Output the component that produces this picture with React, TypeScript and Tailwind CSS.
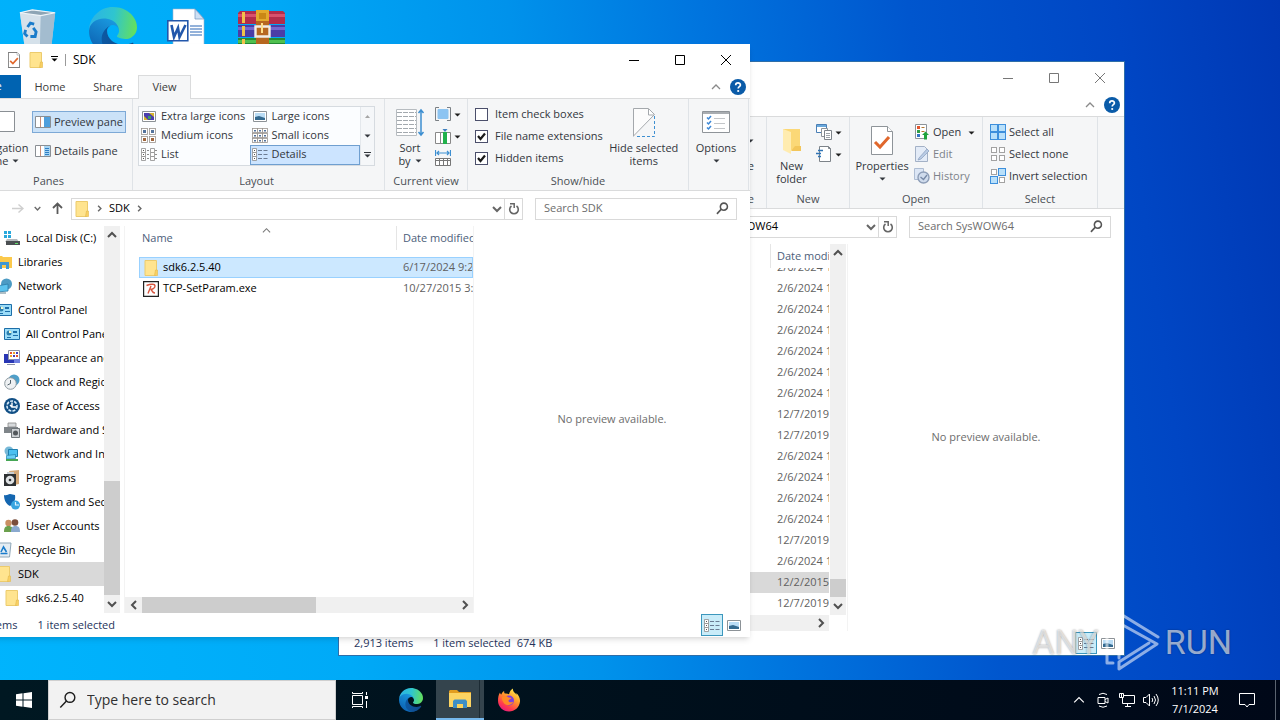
import { useId, type ReactNode } from 'react';
import clsx from 'clsx';

// ---------- small glyphs ----------

type Dir = 'up' | 'down' | 'left' | 'right';

const CHEVRONS: Record<Dir, string> = {
  up: 'M1 7l4-4 4 4',
  down: 'M1 3l4 4 4-4',
  left: 'M7 1L3 5l4 4',
  right: 'M3 1l4 4-4 4',
};

function Chevron({ dir, size = 10, width = 2 }: { dir: Dir; size?: number; width?: number }) {
  return (
    <svg viewBox="0 0 10 10" width={size} height={size} fill="none" stroke="currentColor" strokeWidth={width} className="shrink-0">
      <path d={CHEVRONS[dir]} />
    </svg>
  );
}

function Caret({ up = false, bar = false }: { up?: boolean; bar?: boolean }) {
  return (
    <svg viewBox="0 0 7 7" width="7" height="7" fill="currentColor" className="shrink-0">
      {bar && <path d="M0 0h7v1H0z" />}
      <path d={up ? 'M1 5h5L3.500 2z' : 'M.5 2.500h6l-3 3z'} />
    </svg>
  );
}

function Svg({ size = 16, h, children }: { size?: number; h?: number; children: ReactNode }) {
  return (
    <svg viewBox={`0 0 ${size} ${h ?? size}`} width={size} height={h ?? size} fill="none" className="shrink-0">
      {children}
    </svg>
  );
}

const Folder = () => (
  <Svg>
    <path d="M2 .5h11.500v13l-1 2H2z" fill="#ffe48f" stroke="#eccb6d" />
    <path d="M12.500 10h2v5.500h-3z" fill="#f9d063" stroke="#e3b84c" strokeWidth=".6" />
  </Svg>
);

const SearchGlyph = ({ size = 14 }: { size?: number }) => (
  <svg viewBox="0 0 14 14" width={size} height={size} fill="none" stroke="currentColor" strokeWidth={size > 14 ? 1.1 : 1.7} className="shrink-0">
    <circle cx="8.500" cy="5" r="3.800" />
    <path d="M5.800 7.700L1 12.800" />
  </svg>
);

const RefreshGlyph = () => (
  <Svg size={12}>
    <path d="M3.500 3A4.300 4.300 0 1 0 8.500 3" stroke="#666" strokeWidth="1.600" />
    <path d="M2 .8h4.200V5" stroke="#666" strokeWidth="1.500" />
  </Svg>
);

const HelpGlyph = () => (
  <svg viewBox="0 0 16 16" width="16" height="16">
    <circle cx="8" cy="8" r="8" fill="#0a5ba8" />
    <path d="M5.700 6.200c0-3 4.700-2.900 4.700-.2 0 1.700-2.200 1.700-2.200 3.500" fill="none" stroke="#fff" strokeWidth="1.700" />
    <circle cx="8.200" cy="12" r="1.100" fill="#fff" />
  </svg>
);

// ---------- ribbon icons ----------

const PaneIcon = ({ lines = false }: { lines?: boolean }) => (
  <Svg h={12}>
    <path d="M.5.5h15v11H.5z" fill="#fff" stroke="#8a8f94" />
    <path d="M5.500 1v10" stroke="#c98f78" />
    <path d="M9 1h6v10H9z" fill={lines ? '#a7d4f2' : '#4f9fdc'} />
    {lines && <path d="M10 3.500h4M10 5.500h4M10 7.500h4M10 9.500h4" stroke="#2f7fc4" />}
  </Svg>
);

const PictureIcon = ({ vivid = false }: { vivid?: boolean }) => (
  <Svg size={14} h={11}>
    <path d="M.5.5h13v10H.5z" fill="#fff" stroke="#8c9297" />
    <path d="M2 2h10v7H2z" fill={vivid ? '#4b3fae' : '#b9dcf5'} />
    <path d={vivid ? 'M2 5l4 4H2zM7 2h5v4z' : 'M2 6l4-1 6 2v2H2z'} fill={vivid ? '#d8b52b' : '#33698f'} />
    {vivid && <path d="M6 5h3v3H6z" fill="#3f9f5e" />}
  </Svg>
);

const GridIcon = ({ n }: { n: 2 | 3 }) => {
  const step = n === 2 ? 8 : 5;
  const cells = Array.from({ length: n * n }, (_, i) => [Math.floor(i / n) * step, (i % n) * step]);
  return (
    <Svg h={15}>
      {cells.map(([y, x]) => (
        <g key={`${x}-${y}`}>
          <rect x={x + 0.5} y={y + 0.5} width={step - (n === 2 ? 2 : 0)} height={step - (n === 2 ? 2 : 1)} fill="#fff" stroke="#9a9490" strokeWidth=".8" />
          <rect x={x + 2} y={y + 2} width={n === 2 ? 3 : 2} height={n === 2 ? 3 : 1.5} fill={y > 0 && n === 2 ? '#a0653c' : '#54739c'} />
        </g>
      ))}
    </Svg>
  );
};

const ListIcon = ({ details = false }: { details?: boolean }) => (
  <Svg h={13}>
    {[0, 4, 8].map((y) => (
      <g key={y}>
        <path d={`M.5 ${y + 0.5}h4v4h-4z`} fill="#fff" stroke="#8d8d8d" strokeWidth=".8" />
        <path d={`M2 ${y + 2}h1v1H2z`} fill="#555" />
        {details ? (
          <path d={`M6 ${y + 2.5}h4M11.500 ${y + 2.5}h4`} stroke="#6b7c93" />
        ) : (
          <>
            <path d={`M6 ${y + 2.5}h2M14 ${y + 2.5}h2`} stroke="#8d8d8d" />
            <path d={`M9.500 ${y + 0.5}h4v4h-4z`} fill="#fff" stroke="#8d8d8d" strokeWidth=".8" />
          </>
        )}
      </g>
    ))}
  </Svg>
);

const SortIcon = () => (
  <Svg size={29}>
    <path d="M.5 1.500h20v26H.5z" fill="#fff" stroke="#b7bcc0" />
    <path d="M1 4.500h19M1 8.500h19M1 12.500h19M1 16.500h19M1 20.500h19M1 24.500h19" stroke="#a3a9ae" strokeDasharray="5 1" />
    <path d="M25 2v25M22.500 5L25 2l2.500 3M22.500 24l2.500 3 2.500-3" stroke="#3d8fd1" strokeWidth="1.500" />
  </Svg>
);

const GroupByIcon = () => (
  <Svg h={14}>
    <path d="M4 .5H.5v13H4M12 .5h3.500v13H12" stroke="#7b8085" />
    <path d="M3 2.500h10v9H3z" fill="#8cc4f2" stroke="#8ec4ef" />
  </Svg>
);

const ColumnsIcon = () => (
  <Svg h={15}>
    <path d="M.5 3.500h15v11H.5zM5.500 3v11" fill="#fff" stroke="#888" />
    <path d="M8 3h4v12H8z" fill="#21b14b" />
    <path d="M7.500 0h5L10 3z" fill="#3d7fbf" />
  </Svg>
);

const SizeColumnsIcon = () => (
  <Svg h={16}>
    <path d="M.5 0v6M15.500 0v6M2 3h12M4 1L2 3l2 2M12 1l2 2-2 2" stroke="#3d8fd1" strokeWidth="1.200" />
    <path d="M.5 8.500h15v7H.5zM.5 10.500h15M4.500 8v7M8.500 8v7M12.500 8v7" fill="#fff" stroke="#777" />
  </Svg>
);

const HideIcon = () => (
  <Svg size={22} h={29}>
    <path d="M1 28V1h14l6 6z" fill="#fcfcfc" />
    <path d="M.5 28.500V.5h15l6 6L.5 28" stroke="#a4a8ac" />
    <path d="M15.500 1v6H21" fill="#fff" stroke="#a4a8ac" />
    <path d="M21.500 8v20.500H2" stroke="#3d8fd1" strokeDasharray="3 2" />
  </Svg>
);

const OptionsIcon = () => (
  <Svg size={28} h={22}>
    <path d="M.5.5h27v21H.5z" fill="#fff" stroke="#8f9499" />
    <path d="M1 1h26v2H1z" fill="#a9adb1" />
    <path d="M5 6.500l1.500 1.500L9 5M5 11.500l1.500 1.500L9 10M5 16.500l1.500 1.500L9 15" stroke="#3b87d6" strokeWidth="1.500" />
    <path d="M12 7.500h11M12 12.500h11M12 17.500h11" stroke="#c3c6c9" />
  </Svg>
);

const NavPaneIcon = () => (
  <Svg size={28} h={22}>
    <path d="M.5.5h27v20H.5z" fill="#fff" stroke="#8a8f94" />
    <path d="M1 1h8v19H1z" fill="#4f9fdc" />
  </Svg>
);

const NewFolderIcon = () => (
  <Svg size={20} h={28}>
    <path d="M1 3h17v21H1z" fill="#fbd877" />
    <path d="M1 3l8 3v22l-8-4z" fill="#ffecb0" />
    <path d="M13 20h6v5H9z" fill="#f3c65a" />
  </Svg>
);

const NewItemIcon = () => (
  <Svg>
    <path d="M.5.5h10v8H.5z" fill="#fff" stroke="#4a7fb5" />
    <path d="M1 1h9v2H1z" fill="#6aa9dc" />
    <path d="M5.500 4.500h6v8h-6z" fill="#fff" stroke="#8d9399" />
    <path d="M8.500 6.500h7v9h-7z" fill="#fff" stroke="#7d8389" />
    <path d="M10 9.500h4M10 11.500h4M10 13.500h4" stroke="#9da3a9" />
  </Svg>
);

const EasyAccessIcon = () => (
  <Svg>
    <path d="M3.500.5h9l2 2v13h-11z" fill="#fff" stroke="#7d8389" />
    <path d="M12.500.5v2h2" stroke="#7d8389" />
    <path d="M2 4.500h5M0 7.500h5M2 10.500h3" stroke="#2f73b5" strokeWidth="1.300" />
  </Svg>
);

const PropertiesIcon = ({ small = false }: { small?: boolean }) => (
  <svg viewBox="0 0 22 29" width={small ? 12 : 22} height={small ? 16 : 29} fill="none" className="shrink-0">
    <path d="M.5.500h16l5 5v23H.5z" fill="#fff" stroke={small ? '#555' : '#8e9499'} strokeWidth={small ? 1.6 : 1} />
    <path d="M16.500.5v5h5" fill="#fff" stroke="#8e9499" />
    <path d="M4 16l5 5 9-10" stroke="#e0672c" strokeWidth="3" />
  </svg>
);

const OpenIcon = () => (
  <Svg>
    <path d="M1.500.5h11v14h-11z" fill="#fff" stroke="#8d9399" />
    <path d="M3 2h3v3H3z" fill="#e2542d" />
    <path d="M3 6h3v3H3z" fill="#2f9e48" />
    <path d="M3 10h3v3H3z" fill="#3474c4" />
    <path d="M7.500 3.500h3M7.500 7.500h3" stroke="#b3762f" />
    <path d="M8 11l3.500-3.500L15 11h-2v4.500h-3V11z" fill="#1ea33b" />
  </Svg>
);

const EditIcon = () => (
  <Svg>
    <path d="M1.500.5h9l3 3v12h-12z" fill="#e3ebf7" stroke="#a3b1c6" />
    <path d="M5 12l8-9 2 2-8 8-3 1z" fill="#b9cbe4" stroke="#8fa3c2" strokeWidth=".8" />
  </Svg>
);

const HistoryIcon = () => (
  <Svg>
    <path d="M.5.5h9v11h-9z" fill="#dce6f5" stroke="#aebdd3" />
    <circle cx="9.500" cy="9.500" r="5.500" fill="#cfdbec" stroke="#8d9db7" strokeWidth="1.400" />
    <path d="M6.500 9l3 2.500L13 7" stroke="#7688a5" strokeWidth="1.300" />
  </Svg>
);

const SelectIcon = ({ on }: { on: boolean[] }) => (
  <Svg>
    {on.map((active, i) => {
      const x = (i % 2) * 8;
      const y = Math.floor(i / 2) * 8;
      return active ? (
        <rect key={i} x={x + 0.5} y={y + 0.5} width="7" height="7" fill="#b9e0fa" stroke="#3d8fdc" />
      ) : (
        <rect key={i} x={x + 1.5} y={y + 1.5} width="5" height="5" fill="#fff" stroke="#a2a2a2" />
      );
    })}
  </Svg>
);

// ---------- logos ----------

function EdgeLogo({ size }: { size: number }) {
  const id = useId();
  return (
    <svg viewBox="0 0 256 256" width={size} height={size}>
      <defs>
        <linearGradient id={`${id}a`} x1="0" y1="0" x2="1" y2="0">
          <stop offset="0" stopColor="#0c59a4" />
          <stop offset="1" stopColor="#114a8b" />
        </linearGradient>
        <linearGradient id={`${id}b`} x1=".7" y1="0" x2=".2" y2="1">
          <stop offset="0" stopColor="#1b9de2" />
          <stop offset="1" stopColor="#0b5cad" />
        </linearGradient>
        <linearGradient id={`${id}c`} x1="0" y1=".4" x2="1" y2=".5">
          <stop offset="0" stopColor="#2bb3e6" />
          <stop offset=".5" stopColor="#2fc5cf" />
          <stop offset="1" stopColor="#64e05c" />
        </linearGradient>
      </defs>
      <path fill={`url(#${id}a)`} d="M231.100 190.500c-3.400 1.800-6.900 3.400-10.500 4.700-11.500 4.300-23.700 6.500-35.900 6.500-47.300 0-88.500-32.500-88.500-74.300.1-11.400 6.400-21.900 16.400-27.300-42.800 1.800-53.800 46.400-53.800 72.500 0 73.900 68.100 81.400 82.800 81.400 7.900 0 19.800-2.300 27-4.600l1.300-.4c27.600-9.500 51-28.100 66.600-52.800 1.200-1.900.6-4.300-1.200-5.500-1.300-.8-2.900-.9-4.200-.2z" />
      <path fill={`url(#${id}b)`} d="M105.700 241.400c-8.900-5.500-16.600-12.800-22.700-21.300-26.300-36-18.400-86.500 17.600-112.800 3.800-2.700 7.700-5.200 11.900-7.200 3.100-1.500 8.400-4.100 15.500-4 10.100.1 19.600 4.900 25.700 13 4 5.400 6.300 11.900 6.400 18.700 0-.2 24.500-79.600-80-79.600-43.900 0-80 41.700-80 78.200-.2 19.300 4 38.500 12.100 56 27.600 58.800 94.800 87.600 156.400 67.100-21.100 6.600-44.100 3.700-62.900-8.100z" />
      <path fill={`url(#${id}c)`} d="M152.300 148.900c-.9 1-3.400 2.500-3.400 5.600 0 2.600 1.700 5.200 4.800 7.300 14.300 10 41.400 8.600 41.500 8.600 10.700 0 21.100-2.900 30.300-8.300 18.800-11 30.400-31.100 30.400-52.900.3-22.400-8-37.300-11.300-43.900C223.500 23.900 177.700.5 127.900.5 57.900.5.900 56.700 0 126.700c.5-36.500 36.800-66 80-66 3.500 0 23.500.3 42 10.100 16.300 8.600 24.900 18.900 30.800 29.200 6.200 10.700 7.300 24.100 7.300 29.500 0 5.300-2.700 13.300-7.800 19.400z" />
    </svg>
  );
}

const RecycleBin = ({ size = 40 }: { size?: number }) => (
  <svg viewBox="0 0 40 42" width={size} height={size} className="shrink-0">
    <path d="M1 6l13-3 24 3-4 36H6z" fill="#b5cbdc" />
    <path d="M1 6l22 3-1 33H6z" fill="#d5e1ea" />
    <path d="M23 9l15-3-4 36H22z" fill="#a3bccf" />
    <path d="M1 6l13-3 24 3-15 3z" fill="#8ea5b5" stroke="#eef4f8" strokeWidth="1.200" />
    <path d="M9 21l3-4 4 1M7 24l-1 4 3 3M12 31h5l1-5-3-4" fill="none" stroke="#1a7ccb" strokeWidth="3" />
  </svg>
);

const WordFile = () => (
  <svg viewBox="0 0 38 44" width="38" height="44" className="mr-1">
    <path d="M6 2h22l9 10v34H6z" fill="#fff" stroke="#9eb3cc" strokeWidth=".6" />
    <path d="M28 2v10h9z" fill="#cfe0f3" stroke="#6f93bd" strokeWidth=".7" />
    <path d="M23 19h12M23 22h12M23 25h12M23 28h12" stroke="#2b66b5" strokeWidth="1.200" />
    <path d="M.8 13.800h20v20H.8z" fill="#fff" stroke="#2257ab" strokeWidth="1.600" />
    <path d="M4.500 18l2.500 12 4-9 1.500 9 6-12" fill="none" stroke="#2257ab" strokeWidth="2.600" />
  </svg>
);

const WinRar = () => (
  <svg viewBox="0 0 48 44" width="48" height="44" className="mr-1">
    <path d="M1 6l2-2h43l2 2v11H1z" fill="#b32c4b" />
    <path d="M1 7h47v3H1z" fill="#d8506c" />
    <path d="M1 18h47v12H1z" fill="#4b3da6" />
    <path d="M1 20h47v3H1z" fill="#7566cf" />
    <path d="M1 31h47v13H1z" fill="#258a35" />
    <path d="M1 33h47v3H1z" fill="#4fc04e" />
    <path d="M5 5h3v11H5zM5 19h3v10H5zM5 32h3v11H5z" fill="#f1c24a" />
    <path d="M19 3h13v41H19z" fill="#b7671f" />
    <path d="M19 3h13v11H19z" fill="#e3a92c" />
    <path d="M22 6h7v6h-7z" fill="#c98716" />
    <path d="M18.500 19.500h14v10h-14z" fill="none" stroke="#f1ede6" strokeWidth="2.400" />
    <path d="M25 16v10" stroke="#ffdf8a" strokeWidth="2" />
  </svg>
);

const ExplorerLogo = () => (
  <svg viewBox="0 0 22 20" width="22" height="20">
    <path d="M0 2l1-1h7l2 2h12v4H0z" fill="#e29d1f" />
    <path d="M0 4h22v14H0z" fill="#fcd462" />
    <path d="M4 19v-7l1.500-1.500h11L18 12v7h-4v-4H8v4z" fill="#3e8fc6" />
    <path d="M8 15h6v4H8z" fill="#fbd25b" />
  </svg>
);

const FirefoxLogo = () => {
  const id = useId();
  return (
    <svg viewBox="0 0 24 24" width="24" height="24">
      <defs>
        <linearGradient id={id} x1=".8" y1="0" x2=".2" y2="1">
          <stop offset="0" stopColor="#fff14f" />
          <stop offset=".4" stopColor="#ff9a2b" />
          <stop offset=".75" stopColor="#ff3a4e" />
          <stop offset="1" stopColor="#e31587" />
        </linearGradient>
      </defs>
      <path d="M3 4.500c.2 1 .7 1.800 1.300 2C5 4.800 6 3.500 7.200 3c-.2 1 0 2 .6 2.600 1.500-.2 3 0 4.200.6C12.500 3.700 14 1.500 16 .5c-.3 2 .5 3.300 2 4.500.6.5 1 1.200 1.300 1.800.2-.6.200-1.200 0-1.800C22 7.500 23.300 10.500 23 13.500 22.500 19.300 17.800 23.500 12 23.500S1 19 1 12.800C1 9.800 1.500 6.500 3 4.500z" fill={`url(#${id})`} />
      <circle cx="12" cy="12.500" r="5" fill="#7a3fe0" />
      <path d="M5 9c2-1.500 5-1.500 6.500.5 1 .2 2.500 0 3 .5-.5 1.300-2.500 1.500-3 2.500 0 2 3 2.500 5 1-1 4-7.500 5-10 1C5.200 12.500 4.500 10.500 5 9z" fill="#ff8a25" />
    </svg>
  );
};

// ---------- navigation tree ----------

type TreeKind = 'disk' | 'libraries' | 'network' | 'panel' | 'appearance' | 'clock' | 'ease' | 'hardware' | 'internet' | 'programs' | 'shield' | 'users' | 'bin' | 'folder';

const TREE_ICONS: Record<TreeKind, ReactNode> = {
  folder: <Folder />,
  bin: (
    <Svg>
      <path d="M1 1h14l-1.500 14h-11z" fill="#e4edf3" stroke="#8fa7b8" />
      <path d="M5 10l2.500-5 3 5M4.500 11.500h7" stroke="#1a7ccb" strokeWidth="1.600" />
    </Svg>
  ),
  disk: (
    <Svg>
      <path d="M0 1h3v3H0zM4 1h3v3H4zM0 5h3v3H0zM4 5h3v3H4z" fill="#29a8dc" />
      <path d="M3 9h10l2 3H1z" fill="#b5b9bc" />
      <path d="M2 11h14v4H2z" fill="#4b4f52" />
      <path d="M11 13h3v1h-3z" fill="#61e06b" />
    </Svg>
  ),
  libraries: (
    <Svg>
      <path d="M0 2h6l1 1h9v11H0z" fill="#fbc94c" />
      <path d="M3 15V8h10v7h-3v-4H6v4z" fill="#3f97d3" />
    </Svg>
  ),
  network: (
    <Svg>
      <circle cx="10.500" cy="6" r="5.500" fill="#4c9bc4" />
      <path d="M1 8l11-2v7L1 14z" fill="#5cc3ee" stroke="#2b7ba8" strokeWidth=".8" />
      <path d="M3 15h7" stroke="#62818f" />
    </Svg>
  ),
  panel: (
    <Svg>
      <path d="M.5 2.500h15v11H.5z" fill="#9bdcf8" stroke="#1d6ea8" />
      <circle cx="5" cy="7" r="2.500" fill="#2d7fae" />
      <path d="M9 5h4v2H9zM9 9h5v1H9zM3 11h4v1H3z" fill="#1d6ea8" />
      <path d="M5 7V4.500A2.500 2.500 0 0 1 7.500 7z" fill="#f3f9d2" />
    </Svg>
  ),
  appearance: (
    <Svg>
      <path d="M0 4h13v9H0z" fill="#2836b4" />
      <path d="M4.500.5h11v9h-11z" fill="#fff" stroke="#9093a0" />
      <path d="M6 2h2v2H6zM12 5h2v2h-2z" fill="#e4502e" />
      <path d="M9 2h2v2H9zM6 5h2v2H6z" fill="#f0a02c" />
      <path d="M12 2h2v2h-2zM9 5h2v2H9z" fill="#4a3cb5" />
      <path d="M10 9h6v4h-6z" fill="#6f7fe0" />
      <path d="M3 14h8v1H3z" fill="#8a8fa8" />
    </Svg>
  ),
  clock: (
    <Svg>
      <circle cx="10" cy="6" r="5.500" fill="#4f9fc9" />
      <circle cx="6.500" cy="9.500" r="5.800" fill="#eef1f3" stroke="#8c979e" />
      <path d="M6.500 6v3.500L3.500 11" stroke="#52616b" />
    </Svg>
  ),
  ease: (
    <Svg>
      <circle cx="8" cy="8" r="8" fill="#114f85" />
      <circle cx="8" cy="8" r="5" stroke="#d8ecfb" strokeWidth="1.600" strokeDasharray="3 1.200" />
      <path d="M8 4.500V9h4M6 7l2 2" stroke="#fff" strokeWidth="1.400" />
    </Svg>
  ),
  hardware: (
    <Svg>
      <path d="M4 1h8v4H4z" fill="#d7dadc" stroke="#888" strokeWidth=".8" />
      <path d="M0 5h14v6H0z" fill="#7f8589" />
      <path d="M7.500 6.500h8v9h-8z" fill="#ccd0d3" stroke="#6f7579" />
      <circle cx="11.500" cy="11" r="2.500" fill="#53585c" />
    </Svg>
  ),
  internet: (
    <Svg>
      <circle cx="5" cy="5" r="4.500" fill="#77b9d8" />
      <path d="M4.500 3.500h9v7h-9z" fill="#4cc0f0" stroke="#1f7fae" />
      <path d="M2.500 9.500l9-1v4l-9 .5z" fill="#6ad0f5" stroke="#1f7fae" strokeWidth=".7" />
      <path d="M2 14h12" stroke="#46a655" strokeWidth="2" />
    </Svg>
  ),
  programs: (
    <Svg>
      <path d="M5 1l10-1v14l-5 1z" fill="#d4a878" />
      <path d="M3 2h7v3H3z" fill="#c9ced2" />
      <path d="M0 4h12v12H0z" fill="#2e3133" />
      <circle cx="6" cy="10" r="4.300" fill="#dfe2e4" />
      <circle cx="6" cy="10" r="1.300" fill="#2e3133" />
    </Svg>
  ),
  shield: (
    <Svg>
      <path d="M0 1c3 1 4-1 6-1s3 1 5 1c1 6-2 9-5 11C2 10 0 6 0 1z" fill="#1466b0" />
      <circle cx="11.500" cy="11" r="4.500" fill="#39a5e0" />
      <path d="M11.500 8v3H15" stroke="#e2f4ff" strokeWidth="1.200" />
    </Svg>
  ),
  users: (
    <Svg>
      <circle cx="4.500" cy="5" r="3.200" fill="#c98f63" />
      <path d="M0 14c0-4 1-6 4.500-6S9 10 9 14z" fill="#6ba04d" />
      <circle cx="11" cy="4.500" r="3.300" fill="#7a4d3b" />
      <path d="M7 14c0-4 1-6 4.500-6s4.500 2 4.500 6z" fill="#8aa9cf" />
    </Svg>
  ),
};

interface TreeItem {
  label: string;
  icon: TreeKind;
  child?: boolean;
  selected?: boolean;
}

const TREE: TreeItem[] = [
  { label: 'Local Disk (C:)', icon: 'disk', child: true },
  { label: 'Libraries', icon: 'libraries' },
  { label: 'Network', icon: 'network' },
  { label: 'Control Panel', icon: 'panel' },
  { label: 'All Control Panel Items', icon: 'panel', child: true },
  { label: 'Appearance and Personalization', icon: 'appearance', child: true },
  { label: 'Clock and Region', icon: 'clock', child: true },
  { label: 'Ease of Access', icon: 'ease', child: true },
  { label: 'Hardware and Sound', icon: 'hardware', child: true },
  { label: 'Network and Internet', icon: 'internet', child: true },
  { label: 'Programs', icon: 'programs', child: true },
  { label: 'System and Security', icon: 'shield', child: true },
  { label: 'User Accounts', icon: 'users', child: true },
  { label: 'Recycle Bin', icon: 'bin' },
  { label: 'SDK', icon: 'folder', selected: true },
  { label: 'sdk6.2.5.40', icon: 'folder', child: true },
];

// ---------- scroll bars ----------

function VScroll({ thumb, className }: { thumb: string; className?: string }) {
  return (
    <div className={clsx('flex w-4 shrink-0 flex-col items-center bg-[#f0f0f0] text-[#505050]', className)}>
      <div className="flex h-[17px] items-center"><Chevron dir="up" /></div>
      <div className="flex w-full flex-1 flex-col justify-end">
        <div className={clsx('bg-[#cdcdcd]', thumb)} />
      </div>
      <div className="flex h-[18px] items-center"><Chevron dir="down" /></div>
    </div>
  );
}

function HScroll({ thumb }: { thumb: string }) {
  return (
    <div className="flex h-4 shrink-0 items-center bg-[#f0f0f0] text-[#505050]">
      <div className="flex w-[17px] justify-center"><Chevron dir="left" /></div>
      <div className="h-full flex-1">
        <div className={clsx('h-full bg-[#cdcdcd]', thumb)} />
      </div>
      <div className="flex w-[17px] justify-center"><Chevron dir="right" /></div>
    </div>
  );
}

// ---------- ribbon pieces ----------

function Group({ label, className, children }: { label: string; className: string; children: ReactNode }) {
  return (
    <div className={clsx('flex shrink-0 flex-col border-r border-[#dfe3e7]', className)}>
      <div className="flex h-[74px] pt-1">{children}</div>
      <div className="text-center leading-4 text-[#4a4f55]">{label}</div>
    </div>
  );
}

function BigButton({ icon, lines, caret = false, className }: { icon: ReactNode; lines: string[]; caret?: boolean; className?: string }) {
  return (
    <button className={clsx('flex shrink-0 flex-col items-center leading-[13px]', className)}>
      <span className="flex h-[38px] items-center">{icon}</span>
      {lines.map((line, i) => (
        <span key={line} className="flex items-center gap-1 whitespace-nowrap">
          {line}
          {caret && lines.length > 1 && i === lines.length - 1 && <Caret />}
        </span>
      ))}
      {caret && lines.length === 1 && <span className="flex h-[13px] items-center"><Caret /></span>}
    </button>
  );
}

function SmallButton({ icon, label, caret = false, muted = false }: { icon: ReactNode; label?: string; caret?: boolean; muted?: boolean }) {
  return (
    <button aria-label={label ? undefined : 'Ribbon command'} className={clsx('flex h-[22px] items-center gap-[3px] whitespace-nowrap', muted && 'text-[#7d828a]')}>
      {icon}
      {label}
      {caret && <span className={clsx('text-[#1f1f1f]', label && 'pl-1')}><Caret /></span>}
    </button>
  );
}

function CheckOption({ label, checked = false }: { label: string; checked?: boolean }) {
  return (
    <label className="flex h-[22px] items-center gap-[7px] whitespace-nowrap">
      <span className="relative flex">
        <input type="checkbox" defaultChecked={checked} className="peer size-[13px] appearance-none border border-[#4b4f6b] bg-white" />
        <svg viewBox="0 0 13 13" width="13" height="13" className="pointer-events-none absolute inset-0 hidden peer-checked:block">
          <path d="M3 6l2.500 3L10 3.500" fill="none" stroke="#1a1a1a" strokeWidth="2.200" />
        </svg>
      </span>
      {label}
    </label>
  );
}

const LAYOUTS: { label: string; icon: ReactNode; active?: boolean }[] = [
  { label: 'Extra large icons', icon: <PictureIcon vivid /> },
  { label: 'Large icons', icon: <PictureIcon /> },
  { label: 'Medium icons', icon: <GridIcon n={2} /> },
  { label: 'Small icons', icon: <GridIcon n={3} /> },
  { label: 'List', icon: <ListIcon /> },
  { label: 'Details', icon: <ListIcon details />, active: true },
];

function ViewRibbon() {
  return (
    <>
      <Group label="Panes" className="w-[168px]">
        <BigButton icon={<NavPaneIcon />} lines={['Navigation', 'pane']} caret className="w-[64px] pl-2" />
        <div className="flex flex-col gap-[7px] pt-2 pl-[3px]">
          <button className="flex h-[22px] items-center gap-[3px] border border-[#7da9d6] bg-[#cbe2f8] px-[2px] whitespace-nowrap">
            <PaneIcon />Preview pane
          </button>
          <button className="flex h-[22px] items-center gap-[3px] border border-transparent px-[2px] whitespace-nowrap">
            <PaneIcon lines />Details pane
          </button>
        </div>
      </Group>
      <Group label="Layout" className="w-[252px] pr-[9px] pl-[5px]">
        <div className="mt-[3px] flex h-[60px] flex-1 border border-[#d6dbe0] bg-[#fbfdff]">
          <div className="grid flex-1 grid-cols-2">
            {LAYOUTS.map((l) => (
              <button
                key={l.label}
                className={clsx('-mt-px flex h-5 items-center gap-1 border px-px whitespace-nowrap', l.active ? 'border-[#6f9fd0] bg-[#cce4ff]' : 'border-transparent')}
              >
                <span className="flex w-4 justify-center">{l.icon}</span>
                {l.label}
              </button>
            ))}
          </div>
          <div className="flex w-[14px] flex-col items-center justify-around border-l border-[#e4e8ec] bg-[#f5f7f9]">
            <span className="text-[#a5a5a5]"><Caret up /></span>
            <Caret />
            <Caret bar />
          </div>
        </div>
      </Group>
      <Group label="Current view" className="w-[83px]">
        <BigButton icon={<SortIcon />} lines={['Sort', 'by']} caret className="w-[50px]" />
        <div className="flex flex-col">
          <SmallButton icon={<GroupByIcon />} caret />
          <SmallButton icon={<ColumnsIcon />} caret />
          <SmallButton icon={<SizeColumnsIcon />} />
        </div>
      </Group>
      <Group label="Show/hide" className="w-[221px]">
        <div className="flex flex-col pl-[7px]">
          <CheckOption label="Item check boxes" />
          <CheckOption label="File name extensions" checked />
          <CheckOption label="Hidden items" checked />
        </div>
        <BigButton icon={<HideIcon />} lines={['Hide selected', 'items']} className="mr-1 ml-auto w-[82px]" />
      </Group>
      <Group label="" className="w-[60px]">
        <BigButton icon={<OptionsIcon />} lines={['Options']} caret className="w-[54px]" />
      </Group>
    </>
  );
}

function HomeRibbon() {
  return (
    <>
      <div className="flex-1" />
      <Group label="Organize" className="w-[160px] items-end pr-3">
        <button className="flex flex-col items-end leading-[13px]">
          <span className="flex h-[38px] items-center"><Caret /></span>
          Rename
        </button>
      </Group>
      <Group label="New" className="w-[83px]">
        <BigButton icon={<NewFolderIcon />} lines={['New', 'folder']} className="w-[49px]" />
        <div className="flex flex-col">
          <SmallButton icon={<NewItemIcon />} caret />
          <SmallButton icon={<EasyAccessIcon />} caret />
        </div>
      </Group>
      <Group label="Open" className="w-[133px]">
        <BigButton icon={<PropertiesIcon />} lines={['Properties']} caret className="w-[64px]" />
        <div className="flex flex-col">
          <SmallButton icon={<OpenIcon />} label="Open" caret />
          <SmallButton icon={<EditIcon />} label="Edit" muted />
          <SmallButton icon={<HistoryIcon />} label="History" muted />
        </div>
      </Group>
      <Group label="Select" className="w-[115px]">
        <div className="flex flex-col pl-[7px]">
          <SmallButton icon={<SelectIcon on={[true, true, true, true]} />} label="Select all" />
          <SmallButton icon={<SelectIcon on={[false, false, false, false]} />} label="Select none" />
          <SmallButton icon={<SelectIcon on={[false, true, true, false]} />} label="Invert selection" />
        </div>
      </Group>
      <div className="w-[26px] shrink-0" />
    </>
  );
}

// ---------- explorer window ----------

interface FileRow {
  name: string;
  date: string;
  icon?: ReactNode;
  state?: 'selected' | 'inactive';
}

const SDK_FILES: FileRow[] = [
  { name: 'sdk6.2.5.40', date: '6/17/2024 9:28 AM', icon: <Folder />, state: 'selected' },
  {
    name: 'TCP-SetParam.exe',
    date: '10/27/2015 3:15 PM',
    icon: (
      <Svg>
        <path d="M.6.6h14.800v14.800H.6z" fill="#fff" stroke="#222" strokeWidth="1.200" />
        <path d="M5 12.500L8 5M3.500 4.500c4-1.500 8.500-2 8.500.5S9 8.500 7.500 8.500c2 0 1 3.500 4.500 3.500" stroke="#d8553f" strokeWidth="1.400" />
      </Svg>
    ),
  },
];

const FEB = '2/6/2024 11:40 AM';
const DEC = '12/7/2019 1:09 AM';
const SYSWOW_FILES: FileRow[] = [
  FEB, FEB, FEB, FEB, FEB, FEB, FEB, DEC, DEC, FEB, FEB, FEB, FEB, DEC, FEB, '12/2/2015 9:00 AM', DEC,
].map((date, i) => ({ name: '', date, state: i === 15 ? 'inactive' : undefined }));

interface WindowProps {
  title: string;
  tab: 'Home' | 'View';
  active?: boolean;
  className: string;
  tree: TreeItem[];
  files: FileRow[];
  scrolled?: boolean;
  status: string[];
}

const TABS = [
  { name: 'Home', width: 'w-[58px]' },
  { name: 'Share', width: 'w-[58px]' },
  { name: 'View', width: 'ml-px w-[53px]' },
];

function ViewSwitch() {
  return (
    <div className="ml-auto flex items-center gap-1 pr-[9px]">
      <button aria-label="Details view" className="flex size-[22px] items-center justify-center border border-[#3c97bd] bg-[#c9ecf9]">
        <ListIcon details />
      </button>
      <button aria-label="Large thumbnails" className="flex"><PictureIcon /></button>
    </div>
  );
}

function ExplorerWindow({ title, tab, active = false, className, tree, files, scrolled = false, status }: WindowProps) {
  return (
    <section aria-label={title} className={clsx('absolute flex h-[593px] w-[785px] flex-col bg-white', className)}>
      <header className="flex h-[31px] shrink-0 items-center pr-px pl-[14px]">
        <span className="flex w-[27px]"><Folder /></span>
        <span className="flex w-[22px] pl-[2px]"><PropertiesIcon small /></span>
        <Folder />
        <span className="px-[7px]"><Caret bar /></span>
        <span className="h-3 border-l border-[#9a9a9a]" />
        <h1 className="px-[7px] text-[12px]">{title}</h1>
        <div className={clsx('ml-auto flex', active ? 'text-black' : 'text-[#777]')}>
          {['M0 5.500h10', 'M.5.5h9v9h-9z', 'M0 0l10 10M10 0L0 10'].map((d, i) => (
            <button key={d} aria-label={['Minimize', 'Maximize', 'Close'][i]} className="flex h-[31px] w-[46px] items-center justify-center">
              <svg viewBox="0 0 10 10" width="10" height="10" fill="none" stroke="currentColor" className="overflow-visible"><path d={d} /></svg>
            </button>
          ))}
        </div>
      </header>

      <nav className="flex h-6 shrink-0 items-stretch border-b border-[#dadbdc] text-[#3b3b3b]">
        <button className="w-14 bg-[#0063b1] text-center text-white">File</button>
        {TABS.map((t) => (
          <button key={t.name} className={clsx('-mb-px', t.width, t.name === tab && 'border border-b-0 border-[#dadbdc] bg-[#f5f6f7]')}>
            {t.name}
          </button>
        ))}
        <div className="ml-auto flex items-center gap-[9px] pr-1 text-[#8a8a8a]">
          <Chevron dir="up" width={1.3} />
          <HelpGlyph />
        </div>
      </nav>

      <div className="flex h-[92px] shrink-0 overflow-hidden border-b border-[#dadbdc] bg-[#f5f6f7] text-[#33373d]">
        {tab === 'View' ? <ViewRibbon /> : <HomeRibbon />}
      </div>

      <div className="flex h-[35px] shrink-0 items-center gap-3 pr-[13px]">
        <div className="flex flex-1 items-center">
          <div className="flex w-[106px] items-center justify-end gap-[10px] pr-[7px] text-[#6a6a6a]">
            <Svg size={13}><path d="M1 6.500h11M7.500 2.500l4.500 4-4.500 4" stroke="#cfcfcf" strokeWidth="1.500" /></Svg>
            <Chevron dir="down" size={7} />
            <Svg size={13}><path d="M6.500 12V1.500M2 6l4.500-4.500L11 6" stroke="#5a5a5a" strokeWidth="1.800" /></Svg>
          </div>
          <div className="flex h-[22px] flex-1 items-center border border-[#d9d9d9] pl-[2px] text-black">
            {active ? (
              <>
                <Folder />
                <span className="px-[6px] text-[#666]"><Chevron dir="right" size={7} /></span>
                {title}
                <span className="px-[6px] text-[#666]"><Chevron dir="right" size={7} /></span>
              </>
            ) : (
              <span className="ml-auto pr-[88px] text-right">{title}</span>
            )}
            <span className={clsx('flex h-full items-center gap-[2px] text-[#666]', active && 'ml-auto')}>
              <Chevron dir="down" />
              <button aria-label="Refresh" className="flex h-full w-[18px] items-center justify-center border-l border-[#d9d9d9]"><RefreshGlyph /></button>
            </span>
          </div>
        </div>
        <label className="flex h-[22px] w-[202px] items-center border border-[#d9d9d9] pr-[7px] pl-2 text-[#555]">
          <input type="search" aria-label={`Search ${title}`} placeholder={`Search ${title}`} className="min-w-0 flex-1 bg-transparent outline-none placeholder:text-[#6d6d6d]" />
          <SearchGlyph size={13} />
        </label>
      </div>

      <div className="flex min-h-0 flex-1">
        <div className="flex w-[160px] border-r border-[#f3f3f3] pr-1">
          <ul className="min-w-0 flex-1 overflow-hidden">
            {tree.map((item) => (
              <li key={item.label} className={clsx('flex h-6 items-center gap-[6px] whitespace-nowrap', item.child ? 'pl-[39px]' : 'pl-[31px]', item.selected && 'bg-[#d9d9d9]')}>
                {TREE_ICONS[item.icon]}
                {item.label}
              </li>
            ))}
          </ul>
          <VScroll thumb="h-[114px]" />
        </div>

        <div className="flex w-[348px]">
          <div className="flex min-w-0 flex-1 flex-col">
            <div className="relative flex h-6 shrink-0 items-start text-[#4c607a]">
              <span className="h-full w-[272px] border-r border-[#e5e5e5] pl-[17px] leading-6">Name</span>
              <span className="min-w-0 flex-1 overflow-hidden pl-[6px] leading-6 whitespace-nowrap">Date modified</span>
              <span className="absolute top-0 left-[137px] text-[#777]"><Chevron dir="up" size={9} width={1.2} /></span>
            </div>
            <div className={clsx('min-h-0 flex-1 overflow-hidden', !scrolled && 'pt-[7px]')}>
              <div className={clsx('pl-[14px]', scrolled && '-mt-[11px]')}>
                <table className="w-full table-fixed border-collapse">
                  <tbody>
                    {files.map((f, i) => (
                      <tr
                        key={i}
                        className={clsx('h-[21px]', f.state === 'selected' && 'bg-[#cce8ff] outline outline-[#99d1ff] -outline-offset-1', f.state === 'inactive' && 'bg-[#d9d9d9]')}
                      >
                        <td className="w-[258px] p-0 pl-1 text-black">
                          <span className="flex items-center gap-1">{f.icon}{f.name}</span>
                        </td>
                        <td className="overflow-hidden p-0 pl-[6px] whitespace-nowrap text-[#5f5f5f]">{f.date}</td>
                      </tr>
                    ))}
                  </tbody>
                </table>
              </div>
            </div>
            <HScroll thumb={scrolled ? 'w-[120px]' : 'w-[174px]'} />
          </div>
          {scrolled && <VScroll thumb="h-[18px]" className="mx-px mb-4" />}
        </div>

        <div className="flex flex-1 items-center justify-center border-l border-[#f3f3f3] text-[#6d6d6d]">No preview available.</div>
      </div>

      <footer className="flex h-6 shrink-0 items-center pl-[15px] text-[#26345c]">
        <span>{status[0]}</span>
        <span className="pl-5">{status[1]}</span>
        {status[2] && <span className="pl-[6px]">{status[2]}</span>}
        <ViewSwitch />
      </footer>
    </section>
  );
}

// ---------- taskbar ----------

function Tray() {
  return (
    <div className="ml-auto flex items-center text-white">
      <button aria-label="Show hidden icons" className="flex w-6 justify-center"><Chevron dir="up" size={12} width={1} /></button>
      <button aria-label="Meet now" className="flex w-6 justify-center">
        <Svg>
          <path d="M3 5.500h7v6H3zM10 7.500l3-1.500v5l-3-1.500M4 2.500q4-2.500 8 0M4 14q4 2.500 8 0" stroke="#fff" />
        </Svg>
      </button>
      <button aria-label="Network" className="flex w-6 justify-center">
        <Svg>
          <path d="M5 3.500h10.500v8H3.500V6M.5 1.500h4v4h-4zM8.500 12v2.500M6 14.500h6M2.500 2v3" stroke="#fff" />
        </Svg>
      </button>
      <button aria-label="Volume" className="flex w-6 justify-center">
        <Svg>
          <path d="M.5 5.500H3l3.500-3.500v12L3 10.500H.5zM9 6q1.500 2 0 4M11 4q3 4 0 8M13 2q4.500 6 0 12" stroke="#fff" />
        </Svg>
      </button>
      <div className="w-16 text-center text-[11px] leading-[18px]">
        <div>11:11 PM</div>
        <div>7/1/2024</div>
      </div>
      <button aria-label="Notifications" className="flex w-10 justify-center">
        <Svg><path d="M.5 1.500h15v11H10l-2 2.500-2-2.500H.5z" stroke="#fff" /></Svg>
      </button>
      <div className="ml-2 h-10 w-[5px] border-l border-[#5b6470]" />
    </div>
  );
}

function Taskbar() {
  return (
    <footer className="absolute inset-x-0 bottom-0 flex h-10 items-stretch bg-linear-to-r from-[#001822] via-[#00101c] to-[#000818]">
      <button aria-label="Start" className="flex w-12 items-center justify-center">
        <Svg>
          <path d="M0 2.300l6.500-1v6.200H0zM7.500 1.200L16 0v7.500H7.500zM0 8.500h6.500v6.200L0 13.700zM7.500 8.500H16V16l-8.500-1.200z" fill="#fff" />
        </Svg>
      </button>
      <label className="flex w-[288px] items-center gap-[10px] border border-[#cfcfcf] bg-[#f2f2f2] pl-[10px] text-[#1d1d1d]">
        <SearchGlyph size={18} />
        <input aria-label="Type here to search" placeholder="Type here to search" className="min-w-0 flex-1 bg-transparent text-sm outline-none placeholder:text-[#303030]" />
      </label>
      <button aria-label="Task View" className="flex w-12 items-center justify-center">
        <Svg>
          <path d="M.5 3.500h10v9H.5zM.5 0v1.500h10V0M.5 16v-1.500h10V16M14.500 0v3M14.500 9v7" stroke="#fff" />
          <path d="M13 4h3v3h-3z" fill="#fff" />
        </Svg>
      </button>
      <div className="ml-[3px] flex gap-px">
        <button aria-label="Microsoft Edge" className="flex w-12 items-center justify-center"><EdgeLogo size={24} /></button>
        <button aria-label="File Explorer" className="flex w-12 items-stretch border-b-2 border-[#76b9ed] bg-[#34444d]">
          <span className="flex w-11 items-center justify-center border-r border-[#1c2b34] pl-1"><ExplorerLogo /></span>
        </button>
        <button aria-label="Firefox" className="flex w-12 items-center justify-center"><FirefoxLogo /></button>
      </div>
      <Tray />
    </footer>
  );
}

function Watermark() {
  return (
    <div className="pointer-events-none absolute right-12 bottom-[46px] flex items-center gap-[5px] font-['Roboto',sans-serif] text-[34px] leading-none text-white/60 [text-shadow:0_0_2px_#0006]">
      <span>ANY</span>
      <svg viewBox="0 0 56 64" width="56" height="64" fill="none" stroke="#fff" strokeOpacity=".55" strokeWidth="3" strokeLinejoin="round" strokeLinecap="round">
        <path d="M10 8L3 12v41h6M15 48V3l39 24M15 13l38 21L15 59v-7l30-19" />
      </svg>
      <span>RUN</span>
    </div>
  );
}

const DESKTOP = [
  { name: 'Recycle Bin', icon: <RecycleBin /> },
  { name: 'Microsoft Edge', icon: <EdgeLogo size={48} /> },
  { name: 'Word document', icon: <WordFile /> },
  { name: 'WinRAR', icon: <WinRar /> },
];

export default function App() {
  return (
    <main className="relative h-screen overflow-hidden bg-[linear-gradient(82deg,#00b4fd_0%,#00aaf7_26%,#0092eb_44%,#0074de_58%,#0056ce_73%,#0046c4_88%,#0038b4_100%)] font-['Open_Sans','Noto_Sans',sans-serif] text-[11px] text-black">
      <div className="flex pt-[7px]">
        {DESKTOP.map((d) => (
          <button key={d.name} aria-label={d.name} className="flex w-[75px] justify-center">{d.icon}</button>
        ))}
      </div>
      <ExplorerWindow
        title="SysWOW64"
        tab="Home"
        className="top-[62px] left-[339px] outline outline-[#2f6ea8]"
        tree={[]}
        files={SYSWOW_FILES}
        scrolled
        status={['2,913 items', '1 item selected', '674 KB']}
      />
      <ExplorerWindow title="SDK" tab="View" active className="top-[44px] -left-[35px] shadow-md" tree={TREE} files={SDK_FILES} status={['2 items', '1 item selected']} />
      <Taskbar />
      <Watermark />
    </main>
  );
}
